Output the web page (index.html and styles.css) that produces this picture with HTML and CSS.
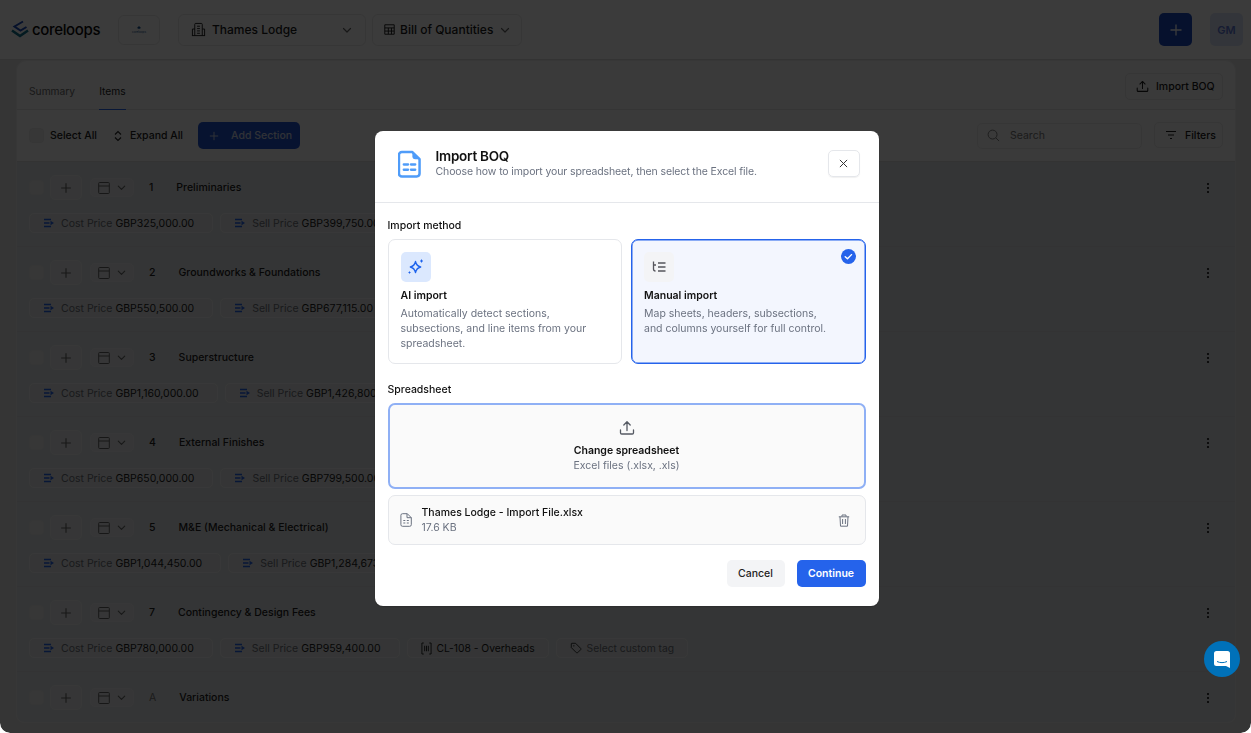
FILE: index.html
```html
<!DOCTYPE html>
<html lang="en">
<head>
    <meta charset="utf-8"/>
    <title>Bill of Quantities - Import BOQ</title>
    <link rel="stylesheet" href="styles.css">
</head>
<body>
<svg class="defs" width="0" height="0">
    <symbol id="i-plus" viewBox="0 0 16 16"><path d="M8 2.500v11M2.500 8h11" fill="none" stroke="currentColor" stroke-width="1.300"/></symbol>
    <symbol id="i-chev" viewBox="0 0 12 12"><path d="M2.500 4.500 6 8l3.500-3.500" fill="none" stroke="currentColor" stroke-width="1.200" stroke-linecap="round" stroke-linejoin="round"/></symbol>
    <symbol id="i-panel" viewBox="0 0 14 14"><path d="M2.500 1.500h9a.8.8 0 0 1 .8.8v9.400a.8.8 0 0 1-.8.8h-9a.8.8 0 0 1-.8-.8V2.300a.8.8 0 0 1 .8-.8ZM1.700 5h10.600" fill="none" stroke="currentColor" stroke-width="1"/></symbol>
    <symbol id="i-price" viewBox="0 0 12 12"><path d="M1 2.500h7M1 6h5.500M1 9.500h7" fill="none" stroke="currentColor" stroke-width="1.500"/><path d="M7.500 3.800 11 6 7.500 8.200Z" fill="currentColor"/></symbol>
    <symbol id="i-kebab" viewBox="0 0 4 12"><circle cx="2" cy="2" r="1.100" fill="currentColor"/><circle cx="2" cy="6" r="1.100" fill="currentColor"/><circle cx="2" cy="10" r="1.100" fill="currentColor"/></symbol>
    <symbol id="i-scan" viewBox="0 0 12 14"><path d="M3 1H1v12h2M9 1h2v12H9M4 4v6M6 4v6M8 4v6" fill="none" stroke="currentColor" stroke-width="1"/></symbol>
    <symbol id="i-tag" viewBox="0 0 14 14"><path d="M1.500 2.200a.7.700 0 0 1 .7-.7h4.300l6 6a1 1 0 0 1 0 1.400l-3.600 3.600a1 1 0 0 1-1.400 0l-6-6Z" fill="none" stroke="currentColor" stroke-width="1"/><circle cx="4.500" cy="4.500" r=".8" fill="currentColor"/></symbol>
    <symbol id="i-upload" viewBox="0 0 16 16"><path d="M1.500 10v2.800a1.200 1.200 0 0 0 1.200 1.200h10.600a1.200 1.200 0 0 0 1.200-1.200V10M8 10.500V2M4.800 5 8 1.800 11.200 5" fill="none" stroke="currentColor" stroke-width="1.300" stroke-linecap="round" stroke-linejoin="round"/></symbol>
</svg>

<div class="window">
    <header class="topbar">
        <div class="brand">
            <svg class="brand_mark" viewBox="0 0 18 18" width="18" height="18"><path d="M1 10.500 9 16l8-5.500" fill="none" stroke="#0d6f8c" stroke-width="2.600"/><path d="M12 1.500 3.500 6.500 9.500 10.500l6-3.500" fill="none" stroke="#1a4bb8" stroke-width="2"/></svg>
            <span class="brand_name">coreloops</span>
        </div>
        <button class="logo_btn">
            <svg viewBox="0 0 6 5" width="6" height="5"><path d="M3 0 1 2l2 1 2-1Z" fill="#14508f"/></svg>
            <span>coreloops</span>
        </button>
        <button class="select select_project">
            <svg viewBox="0 0 16 16" width="15" height="15"><path d="M4 14.500V2.500a1 1 0 0 1 1-1h6a1 1 0 0 1 1 1v12M1.500 14.500v-7h2.500M14.500 14.500v-7H12M1 14.500h14M6.500 4.500h3M6.500 7h3M6.500 9.500h3M6.500 12h3" fill="none" stroke="currentColor" stroke-width="1"/></svg>
            <span>Thames Lodge</span>
            <svg class="chev" width="12" height="12"><use href="#i-chev"/></svg>
        </button>
        <button class="select select_doc">
            <svg viewBox="0 0 14 14" width="11" height="11"><path d="M1 1h12v12H1ZM1 5h12M1 9h12M5.500 5v8M9.500 5v8" fill="none" stroke="currentColor" stroke-width="1.200"/></svg>
            <span>Bill of Quantities</span>
            <svg class="chev" width="12" height="12"><use href="#i-chev"/></svg>
        </button>
        <div class="topbar_right">
            <button class="add_btn"><svg width="16" height="16"><use href="#i-plus"/></svg></button>
            <div class="avatar">GM</div>
        </div>
    </header>

    <main class="panel">
        <div class="tabs">
            <div class="tab">Summary</div>
            <div class="tab tab_on">Items</div>
            <button class="outline_btn import_btn"><svg width="13" height="13"><use href="#i-upload"/></svg>Import BOQ</button>
        </div>
        <div class="toolbar">
            <span class="check"></span>
            <span class="tool_label">Select All</span>
            <svg class="expand_icon" viewBox="0 0 8 12" width="8" height="12"><path d="M1 4.500 4 1.500l3 3M1 7.500l3 3 3-3" fill="none" stroke="currentColor" stroke-width="1.100"/></svg>
            <span class="tool_label">Expand All</span>
            <button class="section_btn"><svg width="12" height="12"><use href="#i-plus"/></svg>Add Section</button>
            <div class="search">
                <svg viewBox="0 0 14 14" width="13" height="13"><circle cx="6" cy="6" r="4.800" fill="none" stroke="currentColor"/><path d="m9.500 9.500 3.500 3.500" stroke="currentColor"/></svg>
                <span>Search</span>
            </div>
            <button class="outline_btn filter_btn"><svg viewBox="0 0 12 10" width="12" height="10"><path d="M1 1.500h10M3 5h6M5 8.500h2" stroke="currentColor" stroke-width="1.200"/></svg>Filters</button>
        </div>

        <section class="row">
            <div class="row_head">
                <span class="check"></span>
                <button class="row_add"><svg width="14" height="14"><use href="#i-plus"/></svg></button>
                <button class="row_toggle"><svg width="14" height="14"><use href="#i-panel"/></svg><svg width="11" height="11"><use href="#i-chev"/></svg></button>
                <span class="row_no">1</span>
                <span class="row_name">Preliminaries</span>
                <svg class="kebab" width="4" height="12"><use href="#i-kebab"/></svg>
            </div>
            <div class="chips">
                <span class="chip"><svg class="price_icon" width="12" height="12"><use href="#i-price"/></svg><em>Cost Price</em> GBP325,000.00</span>
                <span class="chip"><svg class="price_icon" width="12" height="12"><use href="#i-price"/></svg><em>Sell Price</em> GBP399,750.00</span>
            </div>
        </section>
        <section class="row">
            <div class="row_head">
                <span class="check"></span>
                <button class="row_add"><svg width="14" height="14"><use href="#i-plus"/></svg></button>
                <button class="row_toggle"><svg width="14" height="14"><use href="#i-panel"/></svg><svg width="11" height="11"><use href="#i-chev"/></svg></button>
                <span class="row_no">2</span>
                <span class="row_name">Groundworks &amp; Foundations</span>
                <svg class="kebab" width="4" height="12"><use href="#i-kebab"/></svg>
            </div>
            <div class="chips">
                <span class="chip"><svg class="price_icon" width="12" height="12"><use href="#i-price"/></svg><em>Cost Price</em> GBP550,500.00</span>
                <span class="chip"><svg class="price_icon" width="12" height="12"><use href="#i-price"/></svg><em>Sell Price</em> GBP677,115.00</span>
            </div>
        </section>
        <section class="row">
            <div class="row_head">
                <span class="check"></span>
                <button class="row_add"><svg width="14" height="14"><use href="#i-plus"/></svg></button>
                <button class="row_toggle"><svg width="14" height="14"><use href="#i-panel"/></svg><svg width="11" height="11"><use href="#i-chev"/></svg></button>
                <span class="row_no">3</span>
                <span class="row_name">Superstructure</span>
                <svg class="kebab" width="4" height="12"><use href="#i-kebab"/></svg>
            </div>
            <div class="chips">
                <span class="chip"><svg class="price_icon" width="12" height="12"><use href="#i-price"/></svg><em>Cost Price</em> GBP1,160,000.00</span>
                <span class="chip"><svg class="price_icon" width="12" height="12"><use href="#i-price"/></svg><em>Sell Price</em> GBP1,426,800.00</span>
            </div>
        </section>
        <section class="row">
            <div class="row_head">
                <span class="check"></span>
                <button class="row_add"><svg width="14" height="14"><use href="#i-plus"/></svg></button>
                <button class="row_toggle"><svg width="14" height="14"><use href="#i-panel"/></svg><svg width="11" height="11"><use href="#i-chev"/></svg></button>
                <span class="row_no">4</span>
                <span class="row_name">External Finishes</span>
                <svg class="kebab" width="4" height="12"><use href="#i-kebab"/></svg>
            </div>
            <div class="chips">
                <span class="chip"><svg class="price_icon" width="12" height="12"><use href="#i-price"/></svg><em>Cost Price</em> GBP650,000.00</span>
                <span class="chip"><svg class="price_icon" width="12" height="12"><use href="#i-price"/></svg><em>Sell Price</em> GBP799,500.00</span>
            </div>
        </section>
        <section class="row">
            <div class="row_head">
                <span class="check"></span>
                <button class="row_add"><svg width="14" height="14"><use href="#i-plus"/></svg></button>
                <button class="row_toggle"><svg width="14" height="14"><use href="#i-panel"/></svg><svg width="11" height="11"><use href="#i-chev"/></svg></button>
                <span class="row_no">5</span>
                <span class="row_name">M&amp;E (Mechanical &amp; Electrical)</span>
                <svg class="kebab" width="4" height="12"><use href="#i-kebab"/></svg>
            </div>
            <div class="chips">
                <span class="chip"><svg class="price_icon" width="12" height="12"><use href="#i-price"/></svg><em>Cost Price</em> GBP1,044,450.00</span>
                <span class="chip"><svg class="price_icon" width="12" height="12"><use href="#i-price"/></svg><em>Sell Price</em> GBP1,284,673.50</span>
            </div>
        </section>
        <section class="row">
            <div class="row_head">
                <span class="check"></span>
                <button class="row_add"><svg width="14" height="14"><use href="#i-plus"/></svg></button>
                <button class="row_toggle"><svg width="14" height="14"><use href="#i-panel"/></svg><svg width="11" height="11"><use href="#i-chev"/></svg></button>
                <span class="row_no">7</span>
                <span class="row_name">Contingency &amp; Design Fees</span>
                <svg class="kebab" width="4" height="12"><use href="#i-kebab"/></svg>
            </div>
            <div class="chips">
                <span class="chip"><svg class="price_icon" width="12" height="12"><use href="#i-price"/></svg><em>Cost Price</em> GBP780,000.00</span>
                <span class="chip"><svg class="price_icon" width="12" height="12"><use href="#i-price"/></svg><em>Sell Price</em> GBP959,400.00</span>
                <span class="chip chip_tag"><svg width="11" height="13"><use href="#i-scan"/></svg>CL-108 - Overheads</span>
                <span class="chip chip_tag"><svg width="12" height="12"><use href="#i-tag"/></svg><em>Select custom tag</em></span>
            </div>
        </section>
        <section class="row row_last">
            <div class="row_head">
                <span class="check"></span>
                <button class="row_add"><svg width="14" height="14"><use href="#i-plus"/></svg></button>
                <button class="row_toggle"><svg width="14" height="14"><use href="#i-panel"/></svg><svg width="11" height="11"><use href="#i-chev"/></svg></button>
                <span class="row_no row_no_var">A</span>
                <span class="row_name">Variations</span>
                <svg class="kebab" width="4" height="12"><use href="#i-kebab"/></svg>
            </div>
        </section>
    </main>

    <div class="overlay">
        <div class="modal">
            <div class="modal_head">
                <svg class="head_icon" viewBox="0 0 24 28" width="23" height="28"><path d="M4 1.500h11l7.500 7.500v15a3 3 0 0 1-3 3H4a3 3 0 0 1-3-3V4.500a3 3 0 0 1 3-3Z" fill="none" stroke="#4f9cf9" stroke-width="2.600" stroke-linejoin="round"/><path d="M15 1.500V6a3 3 0 0 0 3 3h4.500Z" fill="#4f9cf9"/><path d="M6 14.500h4.500M13.500 14.500H18M6 20h4.500M13.500 20H18" stroke="#4f9cf9" stroke-width="2.400" stroke-linecap="round"/></svg>
                <div class="head_text">
                    <h2>Import BOQ</h2>
                    <p>Choose how to import your spreadsheet, then select the Excel file.</p>
                </div>
                <button class="close_btn"><svg viewBox="0 0 10 10" width="9" height="9"><path d="m1 1 8 8M9 1 1 9" stroke="#333" stroke-width="1.100"/></svg></button>
            </div>
            <div class="modal_body">
                <div class="field_label">Import method</div>
                <div class="methods">
                    <div class="method">
                        <div class="method_icon icon_ai">
                            <svg viewBox="0 0 16 16" width="16" height="16"><path d="M7.500 2.500c.7 3.500 2 4.800 5.200 5.500-3.200.7-4.500 2.100-5.200 5.700-.7-3.600-2-5-5.200-5.700 3.200-.7 4.500-2 5.200-5.500Z" fill="none" stroke="#1d63ed" stroke-width="1.300" stroke-linejoin="round"/><path d="M13.500 .5v3M12 2h3M1.500 12.500v2M.5 13.500h2" stroke="#1d63ed" stroke-width="1"/></svg>
                        </div>
                        <h3>AI import</h3>
                        <p>Automatically detect sections, subsections, and line items from your spreadsheet.</p>
                    </div>
                    <div class="method method_on">
                        <div class="method_icon icon_manual">
                            <svg viewBox="0 0 14 12" width="14" height="12"><path d="M6 2h7.500M6 6h7.500M6 10h7.500M1.500 .5V8a2 2 0 0 0 2 2M1.500 4H4" fill="none" stroke="#55555c" stroke-width="1.300"/></svg>
                        </div>
                        <h3>Manual import</h3>
                        <p>Map sheets, headers, subsections, and columns yourself for full control.</p>
                        <svg class="method_check" viewBox="0 0 16 16" width="15" height="15"><circle cx="8" cy="8" r="8" fill="#2563eb"/><path d="m4.500 8.200 2.400 2.300 4.300-4.500" fill="none" stroke="#fff" stroke-width="1.500" stroke-linecap="round" stroke-linejoin="round"/></svg>
                    </div>
                </div>
                <div class="field_label label_sheet">Spreadsheet</div>
                <div class="drop">
                    <svg class="drop_icon" width="16" height="16"><use href="#i-upload"/></svg>
                    <strong>Change spreadsheet</strong>
                    <span>Excel files (.xlsx, .xls)</span>
                </div>
                <div class="file">
                    <svg class="file_icon" viewBox="0 0 12 14" width="12" height="14"><path d="M2.500 .7h4.800L11.300 4.700v7a1.600 1.600 0 0 1-1.600 1.600H2.500A1.600 1.600 0 0 1 .9 11.700V2.300A1.600 1.600 0 0 1 2.500 .7ZM7 .7v4h4.300M3.300 7.500h2M6.800 7.500h2M3.300 10h2M6.800 10h2" fill="none" stroke="#6b7280" stroke-width="1"/></svg>
                    <div class="file_text">
                        <div class="file_name">Thames Lodge - Import File.xlsx</div>
                        <div class="file_size">17.6 KB</div>
                    </div>
                    <svg class="trash" viewBox="0 0 12 13" width="12" height="13"><path d="M.8 2.800h10.400M4 2.500V1h4v1.500M2 2.800l.5 9.400h7l.5-9.400M4.600 5v5M7.400 5v5" fill="none" stroke="#6b7280" stroke-width="1"/></svg>
                </div>
                <div class="modal_foot">
                    <button class="btn_cancel">Cancel</button>
                    <button class="btn_continue">Continue</button>
                </div>
            </div>
        </div>
    </div>

    <button class="chat_btn">
        <svg viewBox="0 0 16 17" width="16" height="17"><path d="M2.500 0h11A2.500 2.500 0 0 1 16 2.500V17l-4-2H2.500A2.500 2.500 0 0 1 0 12.500v-10A2.500 2.500 0 0 1 2.500 0Z" fill="#fff"/><path d="M3 10.500c3 1.500 7 1.500 10 0" fill="none" stroke="#0071b9" stroke-width="1"/></svg>
    </button>
</div>
</body>
</html>
```

FILE: styles.css
```css
*{ padding:0; margin:0; box-sizing:border-box; }
html, body{ height:100%; background:#fff; overflow:hidden; }
body{ font-family:"Inter", "Liberation Sans", sans-serif; font-size:11px; color:#111; }
button{ font-family:inherit; background:none; border:0; color:inherit; white-space:nowrap; }
svg{ display:block; flex:none; }
.defs{ position:absolute; }

.window{ position:relative; height:733px; overflow:hidden; background:#e4e4e4; border-radius:0 0 10px 10px; display:flex; flex-direction:column; }

/* top bar */
.topbar{ display:flex; align-items:center; height:60px; background:#fff; border-bottom:1px solid #ddd; padding-left:11px; flex:none; }
.brand{ display:flex; align-items:center; gap:3px; width:107px; margin-top:-1px; }
.brand_name{ font-size:15px; font-weight:500; letter-spacing:-.35px; color:#0c0c0c; }
.logo_btn{ width:42px; height:30px; margin-top:1px; border:1px solid #e9e9e9; border-radius:6px; display:flex; flex-direction:column; align-items:center; justify-content:center; font-size:3px; line-height:3px; color:#14508f; }
.select{ height:32px; margin-left:18px; display:flex; align-items:center; border:1px solid #e9e9e9; border-radius:6px; font-size:12px; font-weight:500; color:#1a1a1a; }
.select_project{ width:188px; padding:0 12px; gap:6px; }
.select_doc{ width:150px; margin-left:6px; padding:0 10px 0 11px; gap:5px; }
.select .chev{ margin-left:auto; color:#666; }
.topbar_right{ margin-left:auto; display:flex; gap:18px; padding-right:8px; }
.add_btn{ width:33px; height:33px; border-radius:5px; background:#1c4cc4; color:#fff; display:flex; align-items:center; justify-content:center; }
.avatar{ width:33px; height:33px; border-radius:5px; background:#dde5f8; color:#5f78d8; font-size:11px; font-weight:600; display:flex; align-items:center; justify-content:center; }

/* main panel */
.panel{ margin:0 15px 10px 16px; flex:1 1 auto; background:#e2e6e8; border:1px solid #eee; border-top-left-radius:10px; border-top-right-radius:10px; border-bottom-right-radius:8px; border-bottom-left-radius:8px; overflow:hidden; }
.tabs{ height:49px; background:#f9f9f9; border-bottom:1px solid #e6e6e6; display:flex; align-items:stretch; padding:0 12px; gap:24px; }
.tab{ padding-top:24px; font-size:10.250px; color:#6b6b6b; position:relative; line-height:13px; }
.tab_on{ color:#222; }
.tab_on:after{ content:""; position:absolute; left:0; right:0; bottom:-1px; height:1px; background:#2563eb; }
.outline_btn{ display:flex; align-items:center; height:27px; border:1px solid #e9e9e9; border-radius:5px; font-size:10.500px; font-weight:500; color:#1a1a1a; }
.import_btn{ margin-left:auto; margin-top:12px; padding:0 9px 0 10px; gap:7px; width:98px; }
.toolbar{ height:52px; background:#f9f9f9; border-bottom:1px solid #dcdcdc; display:flex; align-items:center; padding:0 12px; }
.check{ width:15px; height:15px; border:1px solid #e8e8e8; border-radius:4px; background:#eee; flex:none; }
.tool_label{ margin-left:6px; font-size:10.500px; font-weight:500; color:#222; }
.expand_icon{ margin-left:17px; color:#222; }
.expand_icon + .tool_label{ margin-left:8px; }
.section_btn{ margin-left:15px; width:102px; height:27px; border-radius:5px; background:#2255d0; color:#d0d8ea; font-size:10.500px; font-weight:500; display:flex; align-items:center; padding-left:10px; gap:11px; }
.search{ margin-left:auto; width:165px; height:26px; border:1px solid #e9e9e9; border-radius:5px; display:flex; align-items:center; padding-left:9px; gap:10px; font-size:10.500px; color:#777; }
.filter_btn{ margin-left:12px; width:69px; height:26px; padding-left:10px; gap:8px; margin-top:-1px; }

.row{ height:85px; border-bottom:1px solid #dadcde; padding:13px 25px 0 12px; }
.row_last{ border-bottom:0; }
.row_head{ display:flex; align-items:center; height:25px; }
.row_add{ width:32px; height:25px; margin-left:6px; background:#e8eaec; border:1px solid #f0f0f0; border-radius:5px; color:#666; display:flex; align-items:center; justify-content:center; }
.row_toggle{ width:44px; height:19px; margin-left:8px; background:#e8eaec; border:1px solid #eceef0; border-radius:5px; color:#666; display:flex; align-items:center; justify-content:center; gap:5px; }
.row_no{ margin-left:15px; font-size:10.500px; font-weight:500; margin-right:23px; color:#222; }
.row_no_var{ font-weight:400; color:#777; }
.row_name{ font-size:10.500px; font-weight:500; color:#222; }
.kebab{ margin-left:auto; color:#111; }
.chips{ display:flex; gap:7px; margin-top:13px; }
.chip{ display:flex; align-items:center; height:20px; padding:0 18px 0 13px; background:#e3e6e8; border:1px solid #f2f3f4; border-radius:5px; font-size:10.500px; font-weight:400; white-space:nowrap; color:#1c1c1c; }
.chip em{ font-style:normal; font-weight:400; color:#6e7178; margin:0 3px 0 0; }
.price_icon{ color:#2563eb; margin-right:6px; }
.chip_tag{ padding:0 13px; gap:5px; font-size:10.300px; }
.chip_tag em{ margin:0; }

/* dialog */
.overlay{ position:absolute; inset:0; z-index:1; background:rgba(0,0,0,.77); backdrop-filter:blur(.7px); display:flex; align-items:flex-start; justify-content:center; padding-top:131px; }
.modal{ width:504px; height:475px; margin-left:2px; background:#fff; border-radius:8px; box-shadow:0 1px 2px rgba(0,0,0,.2); }
.modal_head{ height:72px; border-bottom:1px solid #e5e7eb; display:flex; align-items:flex-start; padding:19px 19px 0 23px; }
.head_text{ margin-left:15px; }
.modal_head h2{ font-size:13.500px; font-weight:600; line-height:14px; margin-top:-1px; letter-spacing:-.25px; color:#111; }
.modal_head p{ font-size:10.500px; line-height:15px; margin-top:1px; letter-spacing:-.12px; color:#6b7280; }
.close_btn{ margin-left:auto; width:32px; height:27px; border:1px solid #e5e7eb; border-radius:5px; display:flex; align-items:center; justify-content:center; box-shadow:0 1px 1px rgba(0,0,0,.06); }
.modal_body{ padding:16px 13px 0; }
.field_label{ font-size:10.500px; font-weight:500; line-height:13px; color:#111; }
.methods{ display:flex; gap:9px; margin-top:7px; }
.method{ position:relative; flex:1 1 0; height:125px; border:1px solid #e5e7eb; border-radius:7px; padding:12px 12px 0; }
.method_on{ border-color:#2563eb; box-shadow:inset 0 0 0 .5px #2563eb; background:#f3f6fe; }
.method_icon{ width:30px; height:30px; border-radius:5px; display:flex; align-items:center; justify-content:center; }
.icon_ai{ background:#dbe8fe; }
.icon_manual{ background:#f3f4f6; }
.method h3{ font-size:10.500px; font-weight:600; line-height:15px; margin-top:6px; color:#111; }
.method p{ font-size:10.500px; line-height:15px; margin-top:3px; max-width:190px; color:#6b7280; }
.method_check{ position:absolute; top:9px; right:9px; }
.label_sheet{ margin-top:19px; }
.drop{ margin-top:7px; height:86px; border:2px solid #8fb0f5; border-radius:7px; background:#fafafa; display:flex; flex-direction:column; align-items:center; padding-top:15px; }
.drop_icon{ color:#555a63; }
.drop strong{ font-size:10.500px; font-weight:600; line-height:15px; margin-top:7px; color:#111; }
.drop span{ font-size:10.500px; line-height:15px; color:#6b7280; }
.file{ margin-top:6px; height:50px; border:1px solid #e5e7eb; border-radius:7px; background:#fafafa; display:flex; align-items:center; padding:0 15px 0 11px; }
.file_text{ margin-left:10px; }
.file_name{ font-size:10.500px; font-weight:500; line-height:15px; color:#111; }
.file_size{ font-size:10.500px; line-height:15px; color:#6b7280; }
.trash{ margin-left:auto; }
.modal_foot{ display:flex; justify-content:flex-end; gap:12px; margin-top:15px; }
.modal_foot button{ height:27px; border-radius:5px; font-size:10.500px; font-weight:600; }
.modal_foot .btn_cancel{ width:58px; background:#f3f4f6; color:#222; font-weight:500; }
.btn_continue{ width:69px; background:#2563eb; color:#fff; }

.chat_btn{ position:absolute; z-index:3; left:1204px; top:641px; width:36px; height:36px; border-radius:50%; background:#0071b9; display:flex; align-items:center; justify-content:center; }
```
